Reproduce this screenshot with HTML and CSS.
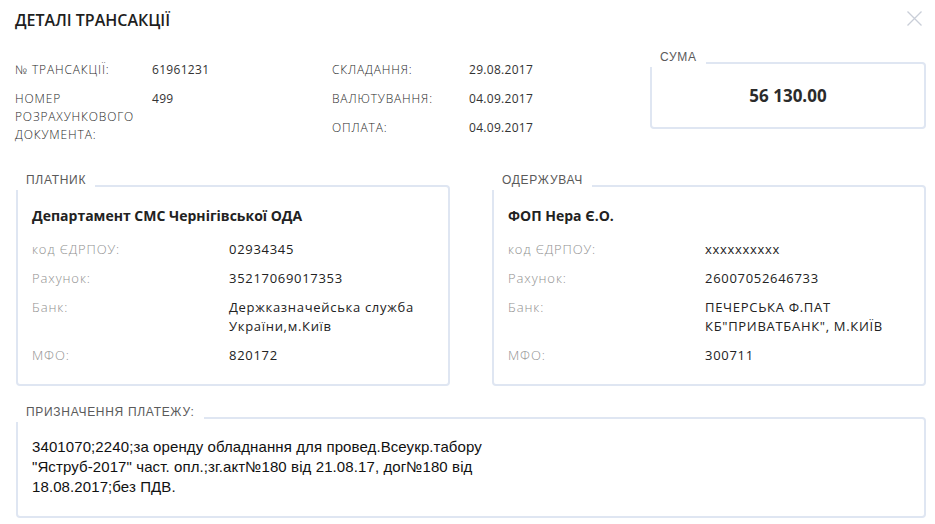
FILE: index.html
```html
<!DOCTYPE html>
<html lang="uk">
<head>
<meta charset="utf-8">
<title>Деталі трансакції</title>
<link rel="stylesheet" href="styles.css">
</head>
<body>
<div class="modal">
  <header class="head">
    <h1 class="title">ДЕТАЛІ ТРАНСАКЦІЇ</h1>
    <button class="close" aria-label="Закрити">
      <svg width="15" height="15" viewBox="0 0 15 15"><path d="M0.5 0.5 L14.5 14.5 M14.5 0.5 L0.5 14.5" stroke="#c9ced8" stroke-width="1.3" fill="none"/></svg>
    </button>
  </header>

  <section class="summary">
    <div class="info">
      <div class="info-label">№ ТРАНСАКЦІЇ:</div><div class="info-value">61961231</div>
      <div class="info-label">НОМЕР РОЗРАХУНКОВОГО ДОКУМЕНТА:</div><div class="info-value">499</div>
    </div>
    <div class="info">
      <div class="info-label">СКЛАДАННЯ:</div><div class="info-value">29.08.2017</div>
      <div class="info-label">ВАЛЮТУВАННЯ:</div><div class="info-value">04.09.2017</div>
      <div class="info-label">ОПЛАТА:</div><div class="info-value">04.09.2017</div>
    </div>
    <div class="panel sum-panel">
      <span class="panel-label">СУМА</span>
      <div class="sum">56 130.00</div>
    </div>
  </section>

  <section class="parties">
    <div class="panel party">
      <span class="panel-label">ПЛАТНИК</span>
      <div class="party-name">Департамент СМС Чернігівської ОДА</div>
      <div class="rows">
        <div class="row-label">код ЄДРПОУ:</div><div class="row-value">02934345</div>
        <div class="row-label">Рахунок:</div><div class="row-value">35217069017353</div>
        <div class="row-label">Банк:</div><div class="row-value">Держказначейська служба України,м.Київ</div>
        <div class="row-label">МФО:</div><div class="row-value">820172</div>
      </div>
    </div>
    <div class="panel party">
      <span class="panel-label">ОДЕРЖУВАЧ</span>
      <div class="party-name">ФОП Нера Є.О.</div>
      <div class="rows">
        <div class="row-label">код ЄДРПОУ:</div><div class="row-value">xxxxxxxxxx</div>
        <div class="row-label">Рахунок:</div><div class="row-value">26007052646733</div>
        <div class="row-label">Банк:</div><div class="row-value">ПЕЧЕРСЬКА Ф.ПАТ КБ"ПРИВАТБАНК", М.КИЇВ</div>
        <div class="row-label">МФО:</div><div class="row-value">300711</div>
      </div>
    </div>
  </section>

  <div class="panel purpose">
    <span class="panel-label">ПРИЗНАЧЕННЯ ПЛАТЕЖУ:</span>
    <p class="purpose-text">3401070;2240;за оренду обладнання для провед.Всеукр.табору<br>"Яструб-2017" част. опл.;зг.акт№180 від 21.08.17, дог№180 від<br>18.08.2017;без ПДВ.</p>
  </div>
</div>
</body>
</html>
```

FILE: styles.css
```css
* { box-sizing: border-box; }

html, body {
  margin: 0;
  background: #ffffff;
}

body {
  font-family: "Open Sans", "Noto Sans", "DejaVu Sans", sans-serif;
  color: #333333;
}

.modal {
  width: 935px;
  padding: 0 9px 0 15px;
}

.head {
  display: flex;
  justify-content: space-between;
  align-items: flex-start;
}

.title {
  margin: 0;
  padding-top: 9px;
  font-size: 16px;
  line-height: 22px;
  font-weight: 600;
  color: #1e1e1e;
}

.close {
  margin: 11px 4px 0 0;
  padding: 0;
  border: 0;
  background: none;
  width: 15px;
  height: 15px;
  display: block;
}
.close svg { display: block; }

.summary {
  display: grid;
  grid-template-columns: 317px 318px 1fr;
  margin-top: 30px;
}

.info {
  display: grid;
  grid-template-columns: 137px 1fr;
  row-gap: 11px;
  align-content: start;
  font-size: 12px;
  line-height: 18px;
}

.info-label {
  font-weight: 300;
  color: #2a2a2a;
  letter-spacing: 0.85px;
  width: 132px;
}

.info-value {
  color: #333333;
  letter-spacing: 0.3px;
}

.panel {
  position: relative;
  border: 2px solid #dfe6f2;
  border-radius: 4px;
  background: #ffffff;
}

.panel-label {
  position: absolute;
  top: -14px;
  left: -4px;
  padding: 0 9px 3px 12px;
  background: #ffffff;
  font-family: "Liberation Sans", Arial, sans-serif;
  font-size: 12px;
  line-height: 14px;
  letter-spacing: 0.7px;
  color: #5a5a5a;
  white-space: nowrap;
}

.sum-panel {
  margin-top: 1px;
  height: 67px;
  display: flex;
  align-items: center;
  justify-content: center;
}

.sum {
  font-size: 17px;
  font-weight: 700;
  color: #2b2b2b;
}

.parties {
  display: flex;
  gap: 42px;
  margin: 41px 0 0 1px;
}

.party {
  flex: 1 1 0;
  padding: 19px 14px 19px 14px;
}

.party-name {
  font-size: 14px;
  line-height: 19px;
  font-weight: 700;
  color: #222222;
  margin-bottom: 15px;
}

.rows {
  display: grid;
  grid-template-columns: 197px 1fr;
  row-gap: 10px;
  font-size: 13px;
  line-height: 19px;
}

.row-label {
  font-weight: 300;
  color: #909090;
  letter-spacing: 0.9px;
}

.row-value {
  color: #222222;
  letter-spacing: 0.7px;
}

.purpose {
  margin: 31px 0 0 1px;
  padding: 18px 14px 19px 14px;
}

.purpose-text {
  margin: 0;
  font-family: "Liberation Sans", Arial, sans-serif;
  font-size: 15px;
  line-height: 20px;
  letter-spacing: 0.1px;
  color: #111111;
}
```
